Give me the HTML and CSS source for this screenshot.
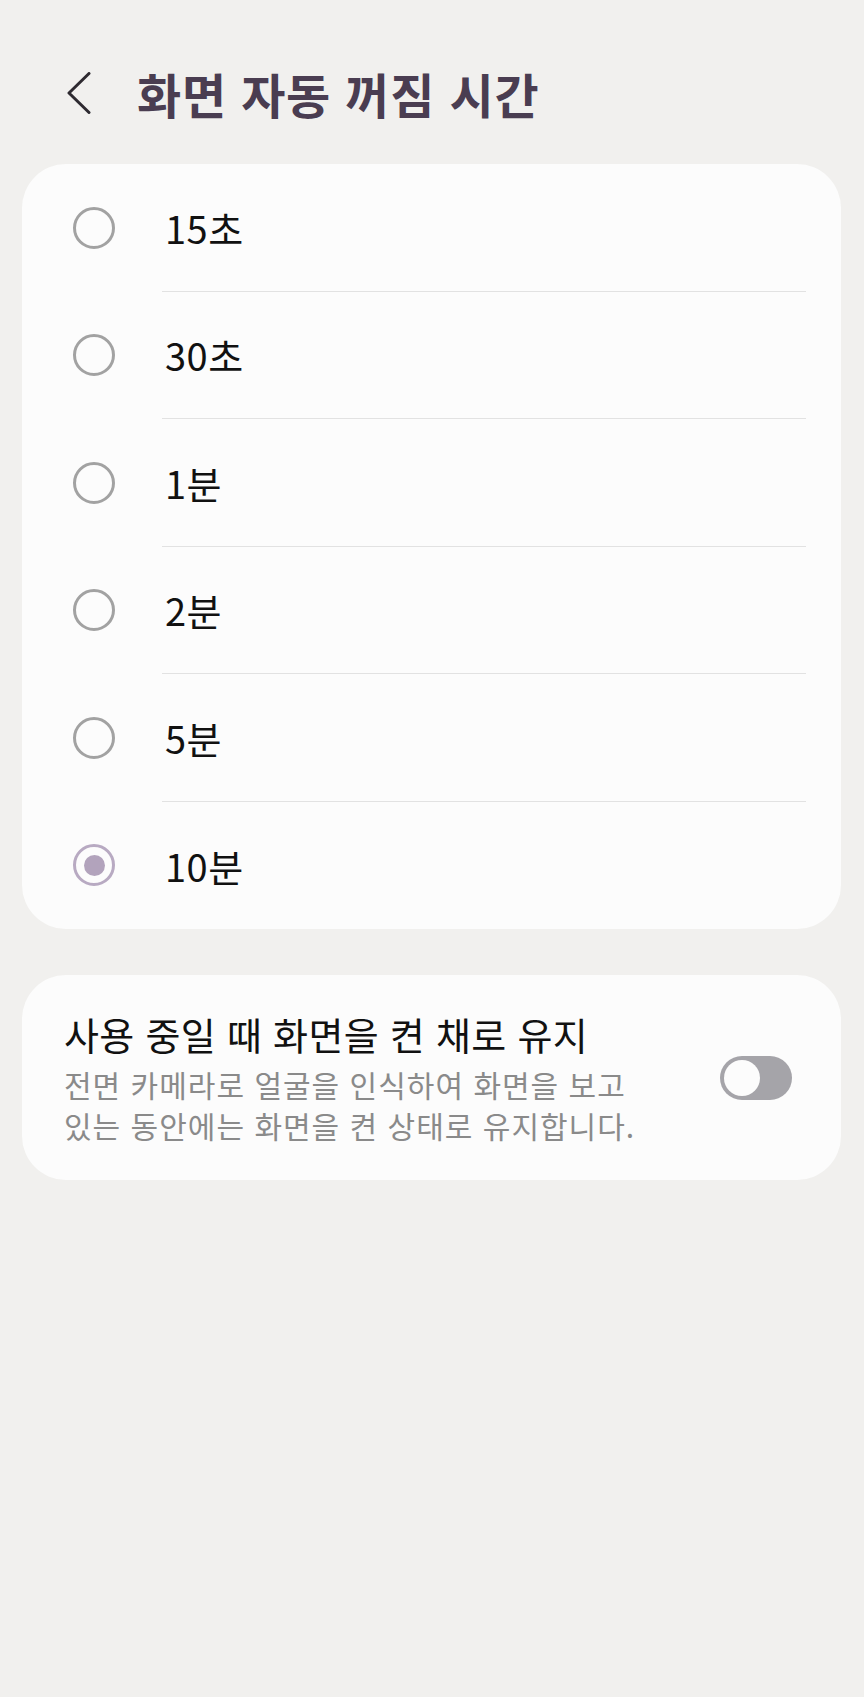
FILE: index.html
```html
<!DOCTYPE html>
<html lang="ko">
<head>
    <meta charset="UTF-8">
    <meta name="viewport" content="width=device-width, initial-scale=1.0">
    <title>화면 자동 꺼짐 시간</title>
    <link rel="stylesheet" href="styles.css">
</head>
<body>

    <!-- Header -->
    <div class="header">
        <button class="back-btn" aria-label="뒤로">
            <svg width="24" height="42" viewBox="0 0 24 42">
                <path d="M22 1.5 L2 21 L22 40.5" fill="none" stroke="#2e2a30" stroke-width="3" stroke-linecap="round" stroke-linejoin="round"/>
            </svg>
        </button>
        <h1>화면 자동 꺼짐 시간</h1>
    </div>

    <!-- Timeout options -->
    <div class="card option-list">
        <div class="option-row">
            <span class="radio"></span>
            <span class="option-label">15초</span>
        </div>
        <div class="option-row">
            <span class="radio"></span>
            <span class="option-label">30초</span>
        </div>
        <div class="option-row">
            <span class="radio"></span>
            <span class="option-label">1분</span>
        </div>
        <div class="option-row">
            <span class="radio"></span>
            <span class="option-label">2분</span>
        </div>
        <div class="option-row">
            <span class="radio"></span>
            <span class="option-label">5분</span>
        </div>
        <div class="option-row selected">
            <span class="radio"></span>
            <span class="option-label">10분</span>
        </div>
    </div>

    <!-- Keep screen on -->
    <div class="card keep-on">
        <div class="keep-on-text">
            <div class="keep-on-title">사용 중일 때 화면을 켠 채로 유지</div>
            <div class="keep-on-desc">전면 카메라로 얼굴을 인식하여 화면을 보고 있는 동안에는 화면을 켠 상태로 유지합니다.</div>
        </div>
        <span class="switch"></span>
    </div>

</body>
</html>
```

FILE: styles.css
```css
body {
    font-family: "Noto Sans CJK KR", "Noto Sans", sans-serif;
    background-color: #f1f0ee;
    margin: 0;
    padding: 0;
    color: #111;
}

.header {
    display: flex;
    align-items: center;
    height: 74px;
    padding: 56px 0 34px 67px;
}

.back-btn {
    background: none;
    border: none;
    padding: 0;
    width: 24px;
    height: 42px;
    margin-right: 46px;
    display: flex;
}

h1 {
    margin: 0;
    font-size: 48px;
    font-weight: 700;
    letter-spacing: 0.8px;
    color: #4a3d51;
}

.card {
    background-color: #fcfcfc;
    margin: 0 23px 0 22px;
    border-radius: 44px;
}

.option-row {
    display: flex;
    height: 127.5px;
}

.radio {
    flex: none;
    box-sizing: border-box;
    width: 42px;
    height: 42px;
    margin: auto 47px auto 51px;
    border: 3px solid #a2a2a2;
    border-radius: 50%;
    display: flex;
    align-items: center;
    justify-content: center;
}

.option-row.selected .radio {
    border-color: #b8aac2;
}

.option-row.selected .radio::after {
    content: "";
    width: 21px;
    height: 21px;
    border-radius: 50%;
    background-color: #b2a3bc;
}

.option-label {
    flex: 1;
    display: flex;
    align-items: center;
    margin-right: 35px;
    padding-left: 3px;
    font-size: 38px;
    letter-spacing: 0.5px;
    border-bottom: 1px solid #e2e2e2;
}

.option-row:last-child .option-label {
    border-bottom: none;
}

.keep-on {
    display: flex;
    align-items: center;
    margin-top: 46px;
    padding: 35px 49px 34px 42px;
}

.keep-on-text {
    flex: 1;
}

.keep-on-title {
    font-size: 38px;
    letter-spacing: 0.3px;
    line-height: 48px;
}

.keep-on-desc {
    max-width: 590px;
    margin-top: 6px;
    font-size: 30px;
    letter-spacing: 1px;
    line-height: 41px;
    color: #8a8a8a;
}

.switch {
    flex: none;
    position: relative;
    width: 72px;
    height: 44px;
    border-radius: 22px;
    background-color: #a5a4a9;
}

.switch::before {
    content: "";
    position: absolute;
    left: 4px;
    top: 4px;
    width: 36px;
    height: 36px;
    border-radius: 50%;
    background-color: #fcfcfc;
}
```
